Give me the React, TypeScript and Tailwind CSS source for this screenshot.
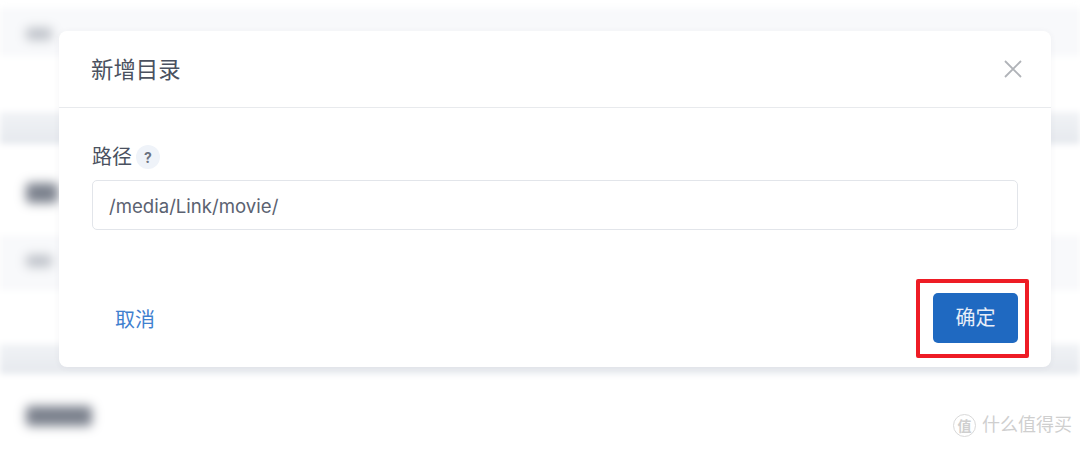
const cjk = "font-['Inter','Noto_Sans_CJK_SC',sans-serif]";

function Blob({ className }: { className: string }) {
  return <div className={`rounded-sm blur-[4px] ${className}`} />;
}

export default function App() {
  return (
    <div className={`relative w-[1080px] h-[449px] overflow-hidden bg-white ${cjk}`}>
      {/* blurred page behind the dialog */}
      <div className="flex flex-col h-full blur-[3px]">
        <div className="h-[8px] bg-white" />
        <div className="h-[48px] pl-[26px] pt-[20px] bg-[#f8f9fb]">
          <Blob className="w-[26px] h-[12px] bg-[#bcc0c7]" />
        </div>
        <div className="h-[56px] bg-white" />
        <div className="h-[32px] bg-gradient-to-b from-[#f1f3f6] to-[#e6e9ee]" />
        <div className="h-[92px] pl-[26px] pt-[39px] bg-white">
          <Blob className="w-[32px] h-[20px] bg-[#7a808c]" />
        </div>
        <div className="h-[54px] pl-[26px] pt-[19px] bg-[#f8f9fb]">
          <Blob className="w-[26px] h-[12px] bg-[#bcc0c7]" />
        </div>
        <div className="h-[54px] bg-white" />
        <div className="h-[30px] bg-gradient-to-b from-[#f1f3f6] to-[#e6e9ee]" />
        <div className="flex-1 pl-[26px] pt-[32px] bg-white">
          <Blob className="w-[66px] h-[20px] bg-[#7a808c]" />
        </div>
      </div>

      {/* dialog */}
      <div className="absolute left-[59px] top-[31px] w-[992px] h-[336px] flex flex-col rounded-lg bg-white shadow-[0_1px_6px_rgba(60,70,90,0.06)]">
        <div className="h-[77px] flex items-center justify-between pl-[32px] pr-[28px] border-b border-[#e8eaed]">
          <span className="text-[22.4px] text-[#4a5160] mt-[1px]">新增目录</span>
          <svg width="20" height="20" viewBox="0 0 20 20" fill="none" stroke="#b0b3b8" strokeWidth="1.8">
            <path d="M2 2 18 18M18 2 2 18" />
          </svg>
        </div>
        <div className="flex-1 flex flex-col px-[33px] pt-[37px]">
          <div className="flex items-center gap-[4px] h-[24px]">
            <span className="text-[20px] leading-[24px] text-[#4a5160]">路径</span>
            <span className="w-[24px] h-[24px] rounded-full bg-[#eff3f9] flex items-center justify-center text-[14px] font-bold text-[#6b7280]">?</span>
          </div>
          <div className="mt-[11px] w-[926px] h-[50px] flex items-center pl-[16px] pr-[17px] pt-[3px] rounded-[5px] border border-[#e2e5ea] text-[18.6px] text-[#5b6271]">
            /media/Link/movie/
          </div>
          <div className="mt-[63px] flex items-center justify-between w-[926px]">
            <button className="ml-[23px] mt-[3px] text-[20px] text-[#3f80cf]">取消</button>
            <button className="w-[85px] h-[50px] rounded-[5px] bg-[#1f69c1] text-[20px] text-[#e8eef8]">确定</button>
          </div>
        </div>
      </div>

      {/* red annotation */}
      <div className="absolute left-[916px] top-[279px] w-[113px] h-[79px] border-[4px] border-[#ee1c25] rounded-[2px]" />

      {/* watermark */}
      <div className="absolute left-[953px] top-[413px] flex items-center gap-[6px] text-[#cfcfcf]">
        <span className="w-[23px] h-[23px] rounded-full border border-[#d9d9d9] flex items-center justify-center text-[14px] font-bold">值</span>
        <span className="text-[18px] leading-[24px]">什么值得买</span>
      </div>
    </div>
  );
}
